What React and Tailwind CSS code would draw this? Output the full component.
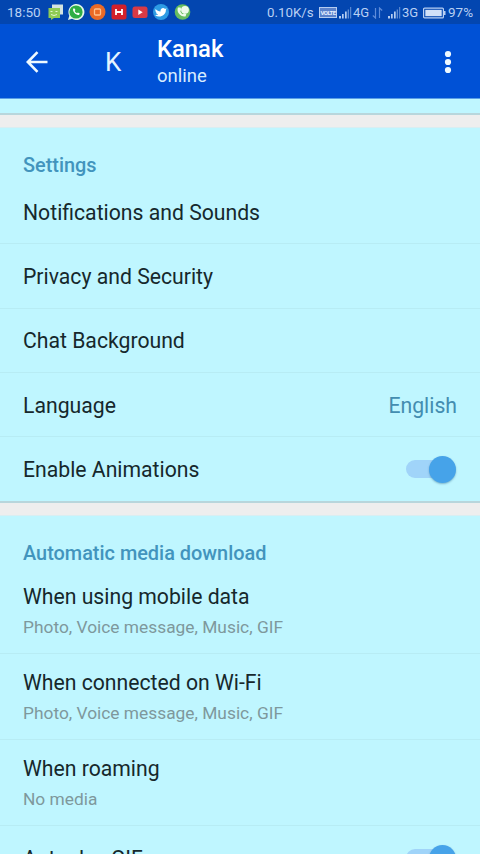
import React from 'react';

const settings = [
  { label: 'Notifications and Sounds' },
  { label: 'Privacy and Security' },
  { label: 'Chat Background' },
  { label: 'Language', value: 'English' },
  { label: 'Enable Animations', enabled: true },
];

const downloads = [
  { label: 'When using mobile data', detail: 'Photo, Voice message, Music, GIF' },
  { label: 'When connected on Wi-Fi', detail: 'Photo, Voice message, Music, GIF' },
  { label: 'When roaming', detail: 'No media' },
];

function NotificationIcons() {
  return (
    <svg width="146" height="18" viewBox="0 0 146 18" className="ml-[6px] shrink-0">
      {/* Messages */}
      <path d="M6 1.500h11v10H6z" fill="#d3e3e0" />
      <path d="M2.500 5h11.500v10H8l-3 2v-2H2.500z" fill="#8fcb55" />
      <path d="M4.500 8.500h2M9.500 8.500h2M5 11.500q3 2 6 0" stroke="#e4f7cf" fill="none" />
      {/* WhatsApp */}
      <path d="M22 17l1.300-4.300A8 8 0 1 1 26 15.700z" fill="#e3f6e8" />
      <circle cx="30" cy="9" r="6.600" fill="#2fae45" />
      <path d="M27.200 5.600c-1 3 2.800 7 5.800 6.400l.8-1.600-1.900-1-.9.900c-1.200-.5-1.900-1.300-2.300-2.300l.7-.9-.8-1.700z" fill="#fff" />
      {/* Orange app */}
      <circle cx="51.500" cy="9" r="8" fill="#ea6a26" />
      <rect x="48.500" y="6" width="6" height="6" rx="1" fill="none" stroke="#ffc08c" strokeWidth="1.300" />
      {/* Red news app */}
      <rect x="65.500" y="1.500" width="15" height="15" rx="2.500" fill="#d3202b" />
      <path d="M70 6v6M76 6v6M70 9h6" stroke="#fff" strokeWidth="1.800" />
      {/* YouTube */}
      <rect x="86.500" y="3.500" width="15" height="11.500" rx="2.500" fill="#d93a45" />
      <path d="M92.300 6.500v5.400l4.400-2.700z" fill="#fff" />
      {/* Twitter */}
      <circle cx="115" cy="9" r="8" fill="#2d9be4" />
      <path d="M109.500 6c1.500 1.600 3 2.300 5 2.400-.4-3 2.800-4.300 4.500-2.500l1.600-.6-.7 1.600c0 5.500-6.200 8.300-10.800 5.300 1.400 0 2.300-.3 3-.9-1.400-.2-2-.9-2.300-1.700h1c-1.300-.7-1.700-1.900-1.300-3.600z" fill="#fff" />
      {/* Call */}
      <circle cx="136.500" cy="9" r="7.800" fill="#67bd60" />
      <circle cx="139" cy="6.800" r="3.900" fill="#eefaea" />
      <path d="M132 4.500c-2 4.500 2.500 9.700 7.500 9l.8-2.300-2.200-1-1.200 1c-1.400-.6-2.300-1.800-2.600-3.200l1-1-.7-2.500z" fill="#eefaea" />
    </svg>
  );
}

function Signal() {
  return (
    <svg width="13" height="12" viewBox="0 0 13 12" className="shrink-0" fill="#b4ccf1">
      <path d="M0 9h2v2.500H0zM3 7h1.700v4.500H3zM6 4.500h1.700v7H6z" />
      <path d="M8.700 2.500h1.200v9H8.700zM11.200 0h1v11.500h-1z" opacity=".6" />
    </svg>
  );
}

function StatusBar() {
  return (
    <div className="h-6 shrink-0 bg-[#0346b0] flex items-center pl-[7px] pr-[6px] text-[13px] leading-none text-[#b9d0f3]">
      <span className="w-[33px] pt-px text-[13.5px] shrink-0 whitespace-nowrap">18:50</span>
      <NotificationIcons />
      <div className="ml-auto pt-px flex items-center whitespace-nowrap">
        <span className="w-[48px] text-[13.3px]">0.10K/s</span>
        <span className="ml-1 w-[18px] h-[11px] border border-[#b4ccf1] bg-[#5b82cb] text-[#e6efff] text-[6px] font-bold tracking-[-0.5px] flex items-center justify-center">
          VOLTE
        </span>
        <span className="ml-[2px] flex"><Signal /></span>
        <span className="ml-[1px] w-[17px]">4G</span>
        <svg width="11" height="12" viewBox="0 0 11 12" fill="none" stroke="#5e8cda" className="ml-[2px]">
          <path d="M3.500 1v10L.8 8.500M7.500 11V1l2.700 2.500" strokeWidth="1.200" />
        </svg>
        <span className="ml-[5px] flex"><Signal /></span>
        <span className="ml-[1px] w-[17px]">3G</span>
        <svg width="23" height="12" viewBox="0 0 23 12" className="ml-[4px]">
          <rect x=".6" y="1.100" width="19.800" height="9.800" rx="1" fill="none" stroke="#b9d0f3" strokeWidth="1.200" />
          <path d="M2.300 2.800h16.400v6.400H2.300z" fill="#d2e1f8" />
          <path d="M21 4h1.500v4H21z" fill="#b9d0f3" />
        </svg>
        <span className="ml-[2px] w-[26px] text-[13.5px]">97%</span>
      </div>
    </div>
  );
}

function Header() {
  return (
    <header className="h-[75px] pt-[2px] shrink-0 bg-[#0051d6] border-b border-[#5b9ee6] flex items-center text-white">
      <svg width="22" height="22" viewBox="0 0 22 22" fill="none" stroke="#eef9ff" strokeWidth="2.600" className="ml-[26px]">
        <path d="M21.500 11H2M11.500 1.200L1.800 11l9.700 9.800" />
      </svg>
      <span className="ml-[57px] w-[18px] text-[26px] leading-none text-[#e4f5ff]">K</span>
      <div className="ml-[34px]">
        <h1 className="text-[23.8px] leading-[27px] font-medium">Kanak</h1>
        <p className="text-[18.5px] leading-[26px] text-[#d6ecff]">online</p>
      </div>
      <svg width="8" height="24" viewBox="0 0 8 24" fill="#eef9ff" className="ml-auto mr-[28px]">
        <circle cx="4" cy="4" r="3.100" />
        <circle cx="4" cy="12" r="3.100" />
        <circle cx="4" cy="20" r="3.100" />
      </svg>
    </header>
  );
}

function Divider() {
  return <div className="h-[15px] shrink-0 bg-[#eeeeee] border-t-2 border-t-[#b8d6dc] border-b border-b-[#d9eef2]" />;
}

function Switch() {
  return (
    <span className="relative w-[51px] h-[27px] flex items-center">
      <span className="w-[40px] h-[18px] rounded-full bg-[#a0d4f9]" />
      <span className="absolute right-[1px] top-0 size-[27px] rounded-full bg-[#46a3e9] shadow-[0_1px_2px_rgba(40,100,140,0.45)]" />
    </span>
  );
}

function SectionTitle({ children }) {
  return <h2 className="h-[52px] pt-[26px] text-[19.9px] leading-6 font-medium text-[#4294bd]">{children}</h2>;
}

export default function App() {
  return (
    <div className="w-full h-[854px] overflow-hidden flex flex-col bg-[#bff6ff] font-['Roboto',sans-serif] text-[#16282c]">
      <StatusBar />
      <Header />
      <div className="h-[14px] shrink-0" />
      <Divider />

      <section className="shrink-0">
        <div className="px-[23px]"><SectionTitle>Settings</SectionTitle></div>
        {settings.map((item, i) => (
          <div
            key={item.label}
            className={`h-[64.3px] px-[23px] flex items-center justify-between text-[21.2px] ${i < settings.length - 1 ? 'border-b border-[#b7ecf4]' : ''}`}
          >
            <span className="pt-[2px]">{item.label}</span>
            {item.value && <span className="pt-[2px] text-[#438db0]">{item.value}</span>}
            {item.enabled && <Switch />}
          </div>
        ))}
      </section>
      <Divider />

      <section className="shrink-0">
        <div className="px-[23px]"><SectionTitle>Automatic media download</SectionTitle></div>
        {downloads.map((item) => (
          <div key={item.label} className="h-[86px] px-[23px] pt-[14px] border-b border-[#b7ecf4]">
            <p className="text-[21.2px] leading-[30px]">{item.label}</p>
            <p className="mt-[1px] text-[17.35px] leading-[28px] text-[#7e989c]">{item.detail}</p>
          </div>
        ))}
        <div className="h-[64px] px-[23px] flex items-center justify-between text-[21.2px]">
          <span>Autoplay GIFs</span>
          <Switch />
        </div>
      </section>
    </div>
  );
}
